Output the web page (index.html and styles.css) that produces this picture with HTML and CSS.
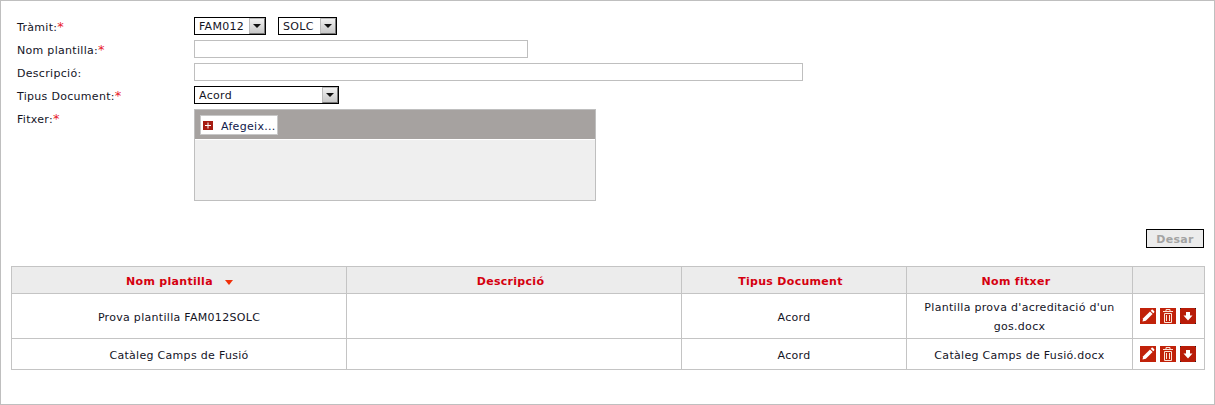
FILE: index.html
```html
<!DOCTYPE html>
<html lang="en">
  <head>
    <meta charset="UTF-8" />
    <title>Plantilles</title>
    <link rel="stylesheet" href="styles.css">
  </head>

  <body>
    <div class="panel">
      <form class="form">
        <div class="row">
          <label>Tràmit:<span class="req">*</span></label>
          <div class="combos">
            <div class="combo combo--fam">
              <select><option>FAM012</option></select>
              <span class="combo__arrow"></span>
            </div>
            <div class="combo combo--solc">
              <select><option>SOLC</option></select>
              <span class="combo__arrow"></span>
            </div>
          </div>
        </div>
        <div class="row">
          <label>Nom plantilla:<span class="req">*</span></label>
          <input class="text text--name" type="text" />
        </div>
        <div class="row">
          <label>Descripció:</label>
          <input class="text text--desc" type="text" />
        </div>
        <div class="row">
          <label>Tipus Document:<span class="req">*</span></label>
          <div class="combo combo--tipus">
            <select><option>Acord</option></select>
            <span class="combo__arrow"></span>
          </div>
        </div>
        <div class="row">
          <label>Fitxer:<span class="req">*</span></label>
          <div class="upload">
            <div class="upload__bar">
              <button class="upload__add" type="button">
                <svg width="10" height="9" viewBox="0 0 10 9">
                  <rect width="10" height="9" fill="#a61c12" />
                  <path d="M5 1.500v6M2 4.500h6" stroke="#fff" stroke-width="1" fill="none" />
                </svg>
                <span>Afegeix...</span>
              </button>
            </div>
            <div class="upload__list"></div>
          </div>
        </div>
        <div class="actions">
          <button class="save" type="button" disabled>Desar</button>
        </div>
      </form>

      <table class="grid">
        <colgroup>
          <col class="c1" /><col class="c2" /><col class="c3" /><col class="c4" /><col class="c5" />
        </colgroup>
        <thead>
          <tr>
            <th>Nom plantilla<span class="sort"></span></th>
            <th>Descripció</th>
            <th>Tipus Document</th>
            <th>Nom fitxer</th>
            <th></th>
          </tr>
        </thead>
        <tbody>
          <tr class="tall">
            <td>Prova plantilla FAM012SOLC</td>
            <td></td>
            <td>Acord</td>
            <td>Plantilla prova d'acreditació d'un gos.docx</td>
            <td>
              <div class="tools">
                <a class="tool" href="#"><svg width="16" height="16" viewBox="0 0 16 16"><path d="M2.500 13.500l.7-3.300 6.800-6.800 2.600 2.600-6.800 6.800z" fill="#fff" /><path d="M10.700 2.700l.8-.8c.4-.4 1-.4 1.400 0l1.200 1.200c.4.4.4 1 0 1.400l-.8.8z" fill="#fff" /></svg></a>
                <a class="tool" href="#"><svg width="16" height="16" viewBox="0 0 16 16"><path d="M3 3.500h10M6 3.500V1.500h4v2M4.500 5.500h7v9h-7zM6.500 7v6M9.500 7v6" stroke="#fbe3d6" stroke-width="1" fill="none" /></svg></a>
                <a class="tool tool--down" href="#"><svg width="16" height="16" viewBox="0 0 16 16"><path d="M6 4h4v3.500h2.500L8 12.500 3.500 7.500H6z" fill="#fff" /><path d="M0 0h1v1H0zM15 0h1v1h-1zM0 15h1v1H0zM15 15h1v1h-1z" fill="#222" /></svg></a>
              </div>
            </td>
          </tr>
          <tr class="short">
            <td>Catàleg Camps de Fusió</td>
            <td></td>
            <td>Acord</td>
            <td>Catàleg Camps de Fusió.docx</td>
            <td>
              <div class="tools">
                <a class="tool" href="#"><svg width="16" height="16" viewBox="0 0 16 16"><path d="M2.500 13.500l.7-3.300 6.800-6.800 2.600 2.600-6.800 6.800z" fill="#fff" /><path d="M10.700 2.700l.8-.8c.4-.4 1-.4 1.400 0l1.200 1.200c.4.4.4 1 0 1.400l-.8.8z" fill="#fff" /></svg></a>
                <a class="tool" href="#"><svg width="16" height="16" viewBox="0 0 16 16"><path d="M3 3.500h10M6 3.500V1.500h4v2M4.500 5.500h7v9h-7zM6.500 7v6M9.500 7v6" stroke="#fbe3d6" stroke-width="1" fill="none" /></svg></a>
                <a class="tool tool--down" href="#"><svg width="16" height="16" viewBox="0 0 16 16"><path d="M6 4h4v3.500h2.500L8 12.500 3.500 7.500H6z" fill="#fff" /><path d="M0 0h1v1H0zM15 0h1v1h-1zM0 15h1v1H0zM15 15h1v1h-1z" fill="#222" /></svg></a>
              </div>
            </td>
          </tr>
        </tbody>
      </table>
    </div>
  </body>
</html>
```

FILE: styles.css
```css
* {
  margin: 0;
  padding: 0;
  box-sizing: border-box;
}

body {
  background: #fff;
  font-family: "DejaVu Sans", Verdana, sans-serif;
  font-size: 11px;
  letter-spacing: 0.3px;
  color: #14141f;
}

.panel {
  width: 1215px;
  height: 405px;
  border: 1px solid #bfbfbf;
  padding: 16px 10px 0;
}

.form {
  display: flex;
  flex-direction: column;
  gap: 5px;
}

.row {
  display: flex;
  align-items: flex-start;
  padding-left: 6px;
}

.row label {
  width: 177px;
  height: 18px;
  line-height: 21px;
}

.req {
  color: #e8202a;
  font-size: 13px;
  line-height: 1;
}

.combos {
  display: flex;
  gap: 12px;
}

.combo {
  display: flex;
  height: 18px;
  border: 1px solid #000;
  background: #fff;
}

.combo--fam {
  width: 72px;
}

.combo--solc {
  width: 59px;
}

.combo--tipus {
  width: 145px;
}

.combo select {
  appearance: none;
  -webkit-appearance: none;
  flex: 1;
  min-width: 0;
  border: none;
  background: transparent;
  font: inherit;
  letter-spacing: inherit;
  color: inherit;
  padding: 1px 0 0 4px;
  outline: none;
}

.combo__arrow {
  width: 16px;
  display: flex;
  align-items: center;
  justify-content: center;
  background: linear-gradient(#f0f0f0, #c8c8c8);
  border: 1px solid #777;
  border-top-color: #bbb;
  border-left-color: #bbb;
}

.combo__arrow::after {
  content: "";
  border-left: 4px solid transparent;
  border-right: 4px solid transparent;
  border-top: 4px solid #111;
}

.text {
  height: 18px;
  border: 1px solid #bfbfbf;
  background: #fff;
  outline: none;
}

.text--name {
  width: 334px;
}

.text--desc {
  width: 609px;
}

.upload {
  width: 402px;
  height: 92px;
  border: 1px solid #bfbfbf;
  background: #efefef;
}

.upload__bar {
  height: 30px;
  background: #a6a2a0;
  padding: 5px 4px 0 5px;
  border-bottom: 1px solid #fff;
}

.upload__add {
  display: flex;
  align-items: center;
  gap: 8px;
  width: 78px;
  height: 20px;
  padding: 0 0 0 2px;
  border: 1px solid #c8c8c8;
  background: #fff;
  font: inherit;
  letter-spacing: inherit;
  color: #10204a;
}

.upload__add span {
  padding-top: 2px;
}

.actions {
  display: flex;
  justify-content: flex-end;
  margin-top: 23px;
}

.save {
  width: 58px;
  height: 19px;
  padding-top: 2px;
  border: 1px solid #000;
  background: #ececec;
  color: #a3a3a3;
  font: inherit;
  letter-spacing: inherit;
  font-weight: bold;
}

.grid {
  width: 1193px;
  margin-top: 18px;
  border-collapse: collapse;
  table-layout: fixed;
}

.c1 {
  width: 335px;
}

.c2 {
  width: 335px;
}

.c3 {
  width: 225px;
}

.c4 {
  width: 226px;
}

.c5 {
  width: 72px;
}

.grid th,
.grid td {
  border: 1px solid #c4c4c4;
  text-align: center;
  vertical-align: middle;
}

.grid th {
  height: 27px;
  padding: 2px 7px 0 0;
  background: #ececec;
  color: #d5000f;
  font-weight: bold;
}

.grid th:first-child {
  padding: 2px 0 0 1px;
}

.grid td {
  padding: 2px 10px 0;
  line-height: 19px;
}

.tall td {
  height: 45px;
}

.short td {
  height: 31px;
}

.sort {
  display: inline-block;
  margin-left: 12px;
  border-left: 4px solid transparent;
  border-right: 4px solid transparent;
  border-top: 5px solid #f0300a;
}

.grid td:last-child {
  padding: 0;
}

.tools {
  display: flex;
  gap: 4px;
  padding-left: 7px;
}

.tool {
  display: block;
  width: 16px;
  height: 16px;
  background: #c1220a;
}

.tool--down {
  background: #b81c08;
}
```
